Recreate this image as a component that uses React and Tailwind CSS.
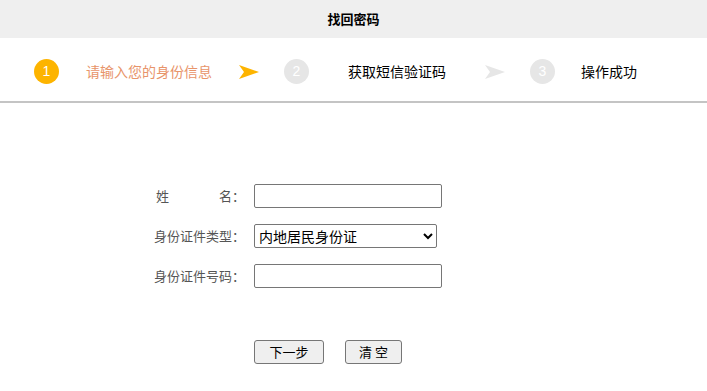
import React from 'react';

const FONT = { fontFamily: '"Noto Sans CJK SC", "Microsoft YaHei", sans-serif' };

function Circle({ n, active }) {
    return (
        <div
            className={`flex-shrink-0 w-[25px] h-[25px] rounded-full flex items-center justify-center text-white text-[14px] ${active ? 'bg-[#fdb400]' : 'bg-[#e6e6e6]'}`}
            style={{ fontFamily: '"Liberation Sans", Arial, sans-serif' }}
        >
            {n}
        </div>
    );
}

function Arrow({ active }) {
    return (
        <svg width="20" height="14" viewBox="0 0 20 14" className="flex-shrink-0">
            <path d="M0 0 L20 7 L0 14 L5 7 Z" fill={active ? '#fdb400' : '#e6e6e6'} />
        </svg>
    );
}

export default function App() {
    return (
        <div className="w-[707px] h-[391px] bg-white text-black overflow-hidden" style={FONT}>
            {/* Title bar */}
            <div className="h-[38px] bg-[#efefef] flex items-center justify-center text-[13px] font-bold">
                找回密码
            </div>

            {/* Steps */}
            <div className="h-[65px] flex items-center pl-[34px] pt-[4px] border-b-2 border-[#c4c4c4]">
                <Circle n="1" active />
                <span className="ml-[27px] text-[14px] text-[#e8946a]">请输入您的身份信息</span>
                <div className="ml-[27px]"><Arrow active /></div>
                <div className="ml-[25px]"><Circle n="2" /></div>
                <span className="ml-[39px] text-[14px]">获取短信验证码</span>
                <div className="ml-[39px]"><Arrow /></div>
                <div className="ml-[25px]"><Circle n="3" /></div>
                <span className="ml-[26px] text-[14px]">操作成功</span>
            </div>

            {/* Form */}
            <div className="pt-[81px] flex flex-col gap-[16px] text-[13px] text-[#555]">
                <div className="flex items-center h-[24px]">
                    <div className="w-[245px] flex justify-end">
                        <div className="w-[89px] flex justify-between">
                            <span>姓</span>
                            <span>名：</span>
                        </div>
                    </div>
                    <input type="text" className="ml-[9px] w-[188px] h-[24px] border border-[#767676] rounded-[2px] bg-white outline-none" />
                </div>
                <div className="flex items-center h-[24px]">
                    <div className="w-[245px] text-right">身份证件类型：</div>
                    <select
                        defaultValue="mainland"
                        className="ml-[9px] w-[183px] h-[24px] border border-[#767676] rounded-[2px] bg-white text-[14px] text-black outline-none"
                        style={{ appearance: 'auto', ...FONT }}
                    >
                        <option value="mainland">内地居民身份证</option>
                        <option value="hk">港澳居民来往内地通行证</option>
                        <option value="tw">台湾居民来往大陆通行证</option>
                        <option value="passport">护照</option>
                    </select>
                </div>
                <div className="flex items-center h-[24px]">
                    <div className="w-[245px] text-right">身份证件号码：</div>
                    <input type="text" className="ml-[9px] w-[188px] h-[24px] border border-[#767676] rounded-[2px] bg-white outline-none" />
                </div>
            </div>

            {/* Buttons */}
            <div className="mt-[52px] flex items-center pl-[254px] text-[13px]">
                <button className="w-[70px] h-[24px] bg-[#efefef] border border-[#767676] rounded-[3px] text-black">
                    下一步
                </button>
                <button className="ml-[21px] w-[57px] h-[24px] bg-[#efefef] border border-[#767676] rounded-[3px] text-black">
                    清 空
                </button>
            </div>
        </div>
    );
}
